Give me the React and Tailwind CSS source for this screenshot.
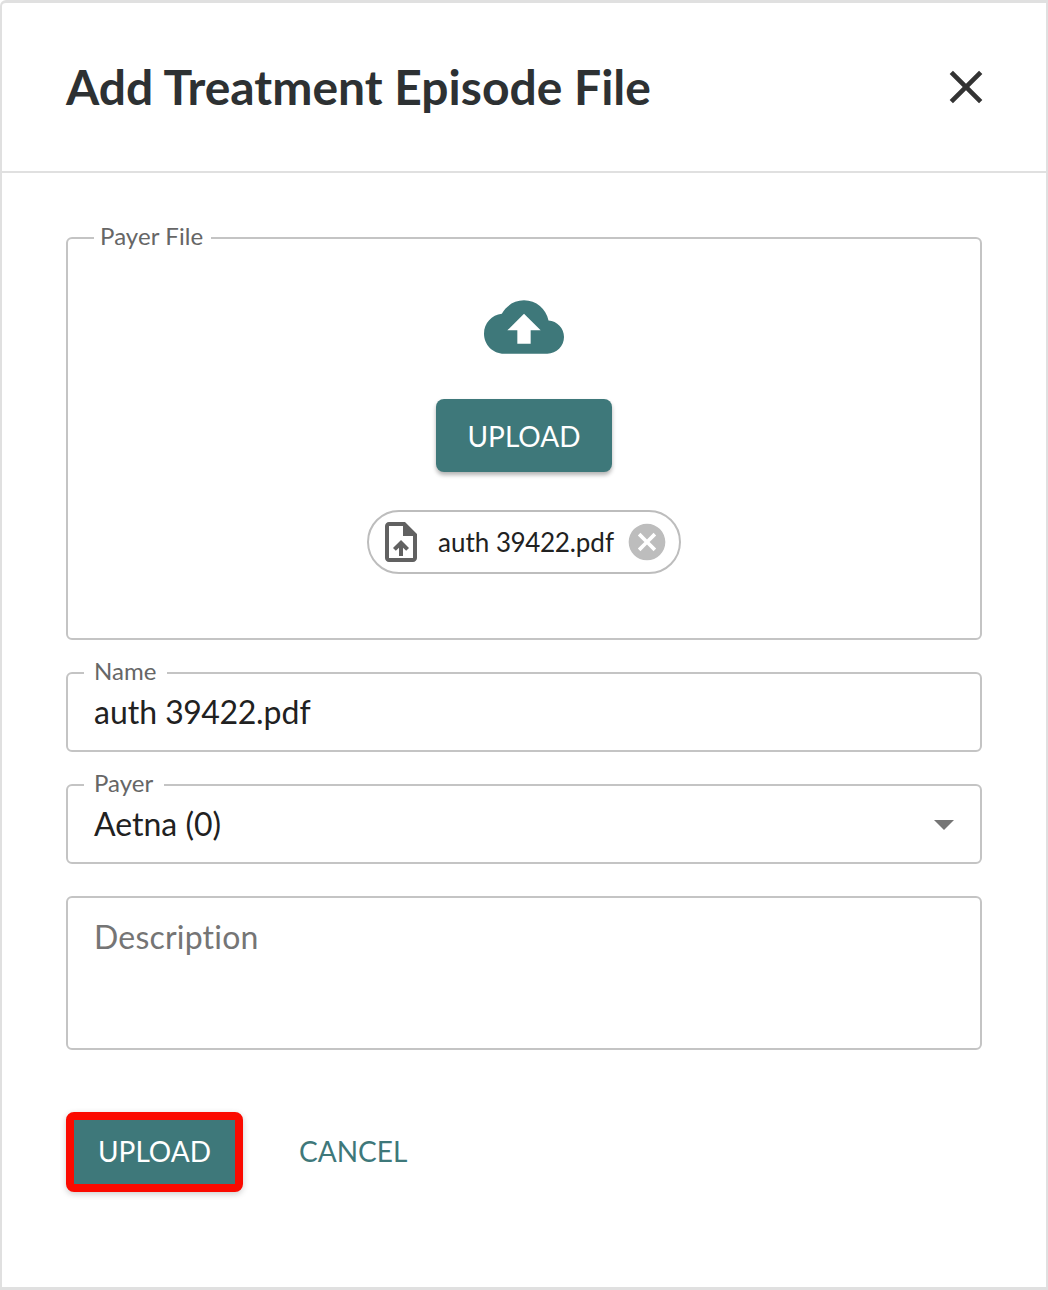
const teal = "bg-[#3e787a]";

function Field({ label, children }) {
  return (
    <fieldset className="border-2 border-[#c4c4c4] rounded-[6px] px-[26px] h-[91px] m-0 min-w-0">
      <legend className="ml-[-10px] pl-[10px] pr-[11px] h-[24px] text-[24px] leading-[20px] text-[#666666]">{label}</legend>
      {children}
    </fieldset>
  );
}

export default function App() {
  return (
    <div className="w-[1048px] h-[1290px] bg-white border-x-2 border-t-[3px] border-b-[3px] border-[#e0e0e0] rounded-tl-[6px] flex flex-col text-[#212121] proportional-nums [font-variant-ligatures:none]" style={{ fontFamily: "Lato, sans-serif" }}>
      <header className="h-[170px] shrink-0 border-b-2 border-[#e0e0e0] flex items-center justify-between pl-[64px] pr-[52px]">
        <h1 className="text-[48px] leading-[56px] font-bold text-[#2d3133]">Add Treatment Episode File</h1>
        <svg width="56" height="56" viewBox="0 0 24 24" fill="#333333">
          <path d="M19 6.41L17.59 5 12 10.59 6.41 5 5 6.41 10.59 12 5 17.59 6.41 19 12 13.41 17.59 19 19 17.59 13.41 12z" />
        </svg>
      </header>

      <main className="px-[64px] pt-[53px] flex flex-col">
        <fieldset className="border-2 border-[#c4c4c4] rounded-[6px] h-[414px] m-0 min-w-0 flex flex-col items-center">
          <legend className="ml-[26px] pl-[6px] pr-[8px] h-[24px] text-[24px] leading-[20px] text-[#666666] tracking-[0.1px]">Payer File</legend>
          <div className="flex flex-col items-center pt-[37px]">
            <svg width="80" height="80" viewBox="0 0 24 24" fill="#3e787a" className="block">
              <path d="M19.35 10.04C18.67 6.59 15.64 4 12 4 9.11 4 6.6 5.64 5.35 8.04 2.34 8.36 0 10.91 0 14c0 3.31 2.69 6 6 6h13c2.76 0 5-2.24 5-5 0-2.64-2.05-4.78-4.65-4.96zM14 13v4h-4v-4H7l5-5 5 5h-3z" />
            </svg>
            <button className={`mt-[32px] w-[176px] h-[73px] rounded-[8px] ${teal} text-white text-[28px] shadow-[0_3px_4px_rgba(0,0,0,0.3)]`}>UPLOAD</button>
            <div className="mt-[38px] w-[314px] h-[64px] rounded-full border-2 border-[#bdbdbd] flex items-center pl-[8px]">
              <svg width="48" height="48" viewBox="0 0 24 24" fill="#616161" className="shrink-0">
                <path d="M14 2H6c-1.1 0-1.99.9-1.99 2L4 20c0 1.1.89 2 1.99 2H18c1.1 0 2-.9 2-2V8l-6-6zm4 18H6V4h7v5h5v11zM8 15.01l1.41 1.41L11 14.84V19h2v-4.16l1.59 1.59L16 15.01 12.01 11 8 15.01z" />
              </svg>
              <span className="ml-[13px] text-[26px] leading-[32px] text-[#212121] whitespace-nowrap">auth 39422.pdf</span>
              <svg width="44" height="44" viewBox="0 0 24 24" fill="#bdbdbd" className="shrink-0 ml-[11px]">
                <path d="M12 2C6.47 2 2 6.47 2 12s4.47 10 10 10 10-4.47 10-10S17.53 2 12 2zm5 13.59L15.59 17 12 13.41 8.41 17 7 15.59 10.59 12 7 8.41 8.41 7 12 10.59 15.59 7 17 8.41 13.41 12 17 15.59z" />
              </svg>
            </div>
          </div>
        </fieldset>

        <div className="mt-[21px]">
          <Field label="Name">
            <div className="text-[32px] leading-[40px] text-[#212121] mt-[7px]">auth 39422.pdf</div>
          </Field>
        </div>

        <div className="mt-[21px]">
          <Field label="Payer">
            <div className="flex items-center justify-between mt-[7px] h-[40px]">
              <span className="text-[32px] leading-[40px] text-[#212121] normal-nums">Aetna (0)</span>
              <span className="w-0 h-0 mt-[2px] border-x-[10px] border-x-transparent border-t-[10px] border-t-[#757575]" />
            </div>
          </Field>
        </div>

        <div className="mt-[32px] h-[154px] border-2 border-[#c4c4c4] rounded-[6px] px-[26px] pt-[19px]">
          <span className="text-[32px] leading-[40px] text-[#757575] tracking-[0.2px]">Description</span>
        </div>

        <div className="mt-[62px] flex items-center">
          <button className={`w-[177px] h-[80px] pb-[2px] rounded-[8px] border-[8px] border-[#fb0a00] ${teal} text-white text-[28px] shadow-[0_2px_6px_rgba(0,0,0,0.2)]`}>UPLOAD</button>
          <button className="ml-[56px] pb-[2px] text-[28px] text-[#3e787a]">CANCEL</button>
        </div>
      </main>
    </div>
  );
}
